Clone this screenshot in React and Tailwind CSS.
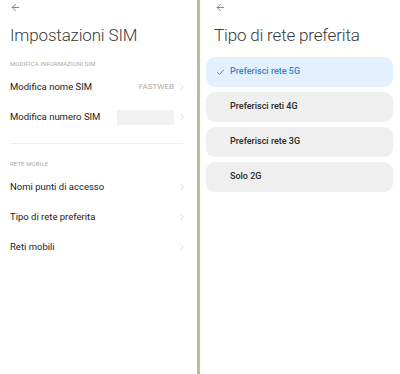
import { ArrowLeft, ChevronRight, Check } from "lucide-react";

function Header({ children }) {
  return (
    <div className="flex h-[17px] items-center text-[6px] uppercase tracking-[0.02em] text-[#a9a9a9]">
      {children}
    </div>
  );
}

function Row({ label, children }) {
  return (
    <div className="flex h-[30px] items-center justify-between">
      <span className="text-[9.5px] text-[#222]">{label}</span>
      <div className="flex items-center gap-[3px]">
        {children}
        <ChevronRight className="h-[10px] w-[10px] text-[#c4c4c4]" strokeWidth={1.5} />
      </div>
    </div>
  );
}

const options = [
  { label: "Preferisci rete 5G", active: true },
  { label: "Preferisci reti 4G" },
  { label: "Preferisci rete 3G" },
  { label: "Solo 2G" },
];

export default function App() {
  return (
    <div className="flex h-[374px] w-[400px] bg-white font-['Roboto',sans-serif]">
      <div className="w-[197px] px-[10px]">
        <div className="flex h-[14px] items-center">
          <ArrowLeft className="h-[11px] w-[11px] text-[#555]" strokeWidth={1.5} />
        </div>
        <div className="mt-[9px] h-[24px] text-[17px] font-light leading-[24px] tracking-[-0.01em] text-[#3a3a3a]">
          Impostazioni SIM
        </div>
        <div className="mt-[8px]">
          <Header>Modifica informazioni SIM</Header>
          <Row label="Modifica nome SIM">
            <span className="text-[8px] text-[#aaa]">FASTWEB</span>
          </Row>
          <Row label="Modifica numero SIM">
            <div className="h-[15px] w-[57px] bg-[#f1f1f1]" />
          </Row>
        </div>
        <div className="mt-[11px] mr-[4px] h-px bg-[#efefef]" />
        <div className="mt-[11px]">
          <Header>Rete mobile</Header>
          <Row label="Nomi punti di accesso" />
          <Row label="Tipo di rete preferita" />
          <Row label="Reti mobili" />
        </div>
      </div>
      <div className="w-[3px] bg-[#a3c795]" />
      <div className="flex-1 pl-[6px] pr-[7px]">
        <div className="flex h-[14px] items-center pl-[9px]">
          <ArrowLeft className="h-[11px] w-[11px] text-[#555]" strokeWidth={1.5} />
        </div>
        <div className="mt-[9px] h-[24px] pl-[8px] text-[17px] font-light leading-[24px] tracking-[-0.01em] text-[#3a3a3a]">
          Tipo di rete preferita
        </div>
        <div className="mt-[10px] flex flex-col gap-[5px]">
          {options.map((o) => (
            <div
              key={o.label}
              className={
                o.active
                  ? "flex h-[30px] items-center rounded-[9px] bg-[#e3f0fd] pl-[10px] text-[9px] font-medium text-[#3a84c6]"
                  : "flex h-[30px] items-center rounded-[9px] bg-[#efefef] pl-[24px] text-[9px] font-medium text-[#2a2a2a]"
              }
            >
              {o.active && <Check className="mr-[5px] h-[9px] w-[9px]" strokeWidth={2.5} />}
              {o.label}
            </div>
          ))}
        </div>
      </div>
    </div>
  );
}
